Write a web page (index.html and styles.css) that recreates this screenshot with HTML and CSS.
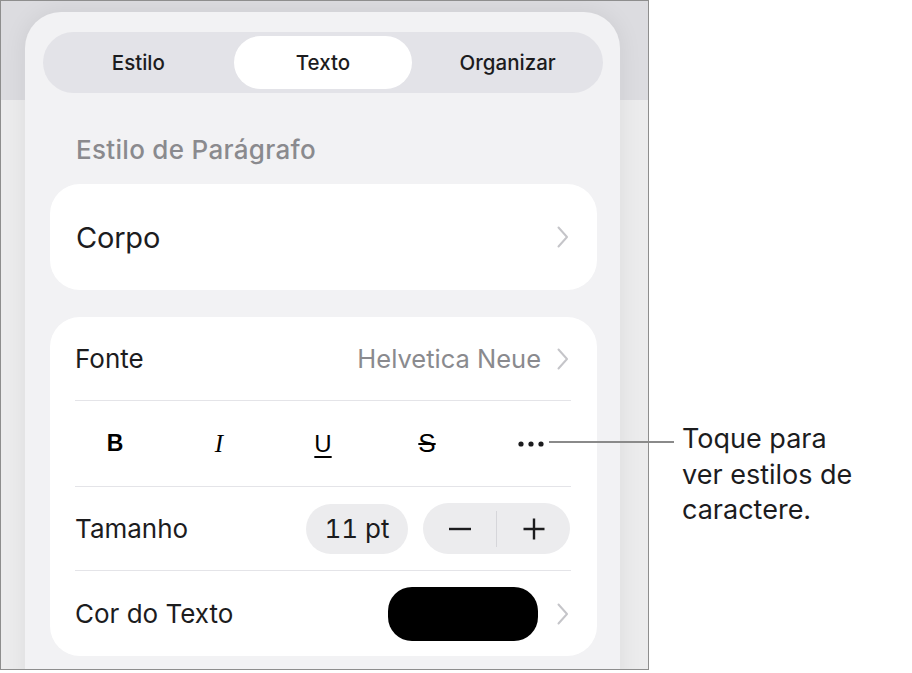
FILE: index.html
```html
<!DOCTYPE html>
<html lang="pt">
<head>
<meta charset="utf-8">
<title>Texto</title>
<link rel="stylesheet" href="styles.css">
</head>
<body>
<div class="stage">
  <div class="frame">
    <div class="panel">
      <div class="segmented">
        <div class="seg">Estilo</div>
        <div class="seg seg-active">Texto</div>
        <div class="seg">Organizar</div>
      </div>
      <div class="content">
        <div class="heading">Estilo de Parágrafo</div>
        <div class="card card-single">
          <span class="big">Corpo</span>
          <svg class="chev" viewBox="0 0 12 22" width="12" height="22"><path d="M1.5 1.5 L10 11 L1.5 20.5" /></svg>
        </div>
        <div class="card card-list">
          <div class="row row-font">
            <span class="label">Fonte</span>
            <span class="value">Helvetica Neue
              <svg class="chev" viewBox="0 0 12 22" width="12" height="22"><path d="M1.5 1.5 L10 11 L1.5 20.5" /></svg>
            </span>
          </div>
          <div class="row row-styles">
            <span class="st st-b">B</span>
            <span class="st st-i">I</span>
            <span class="st st-u">U</span>
            <span class="st st-s">S</span>
            <span class="st st-more">
              <svg viewBox="0 0 26 6" width="26" height="6"><circle cx="3" cy="3" r="2.6"/><circle cx="13" cy="3" r="2.6"/><circle cx="23" cy="3" r="2.6"/></svg>
            </span>
          </div>
          <div class="row row-size">
            <span class="label">Tamanho</span>
            <span class="size-ctrls">
              <span class="pt">11 pt</span>
              <span class="stepper">
                <span class="step">
                  <svg viewBox="0 0 22 22" width="22" height="22"><path d="M0 11 H22"/></svg>
                </span>
                <span class="step-div"></span>
                <span class="step">
                  <svg viewBox="0 0 22 22" width="22" height="22"><path d="M0.5 11 H21.5 M11 0.5 V21.5"/></svg>
                </span>
              </span>
            </span>
          </div>
          <div class="row row-color">
            <span class="label">Cor do Texto</span>
            <span class="value">
              <span class="swatch"></span>
              <svg class="chev" viewBox="0 0 12 22" width="12" height="22"><path d="M1.5 1.5 L10 11 L1.5 20.5" /></svg>
            </span>
          </div>
        </div>
      </div>
    </div>
  </div>
  <div class="callout">
    <div class="callout-line"></div>
    <div class="callout-text">Toque para<br>ver estilos de<br>caractere.</div>
  </div>
</div>
</body>
</html>
```
FILE: styles.css
```css
html, body {
  margin: 0;
  padding: 0;
  background: #ffffff;
}
body {
  font-family: Inter, "Liberation Sans", Arial, sans-serif;
  color: #1c1c1e;
}
.stage {
  position: relative;
  width: 912px;
  height: 673px;
  overflow: hidden;
}
.frame {
  width: 647px;
  height: 668px;
  border: 1px solid #8e8e8e;
  overflow: hidden;
  background: linear-gradient(to bottom, #dcdce0 0, #dcdce0 99px, #ececed 99px, #ececed 100%);
}
.panel {
  margin: 11px 0 0 24px;
  width: 595px;
  height: 700px;
  border-radius: 36px 36px 0 0;
  background: #f2f2f4;
  box-shadow: 0 0 24px rgba(0, 0, 0, 0.07);
  overflow: hidden;
}
.segmented {
  margin: 20px 17px 0 18px;
  height: 61px;
  box-sizing: border-box;
  border-radius: 31px;
  background: #e3e3e8;
  padding: 4px 3px;
  display: grid;
  grid-template-columns: 1fr 1fr 1fr;
}
.seg {
  display: flex;
  align-items: center;
  justify-content: center;
  font-size: 20.5px;
  font-weight: 500;
  border-radius: 27px;
}
.seg-active {
  background: #ffffff;
  margin: 0 3px 0 3px;
}
.content {
  margin: 0 23px 0 25px;
}
.heading {
  padding: 41px 0 0 26px;
  height: 32px;
  line-height: 32px;
  margin-bottom: 18px;
  font-size: 26px;
  font-weight: 500;
  color: #8a8a8e;
  letter-spacing: 0.3px;
}
.card {
  background: #ffffff;
  border-radius: 30px;
}
.card-single {
  height: 106px;
  display: flex;
  align-items: center;
  justify-content: space-between;
  padding: 0 28px 0 26px;
  margin-bottom: 27px;
}
.big {
  font-size: 29px;
  letter-spacing: -0.2px;
}
.chev {
  display: block;
  fill: none;
  stroke: #c5c5c9;
  stroke-width: 2;
  stroke-linecap: round;
  stroke-linejoin: round;
}
.card-list {
  height: 339px;
  padding: 0 26px 0 25px;
}
.row {
  display: flex;
  align-items: center;
  justify-content: space-between;
  border-bottom: 1px solid #e4e4e8;
}
.row:last-child {
  border-bottom: none;
}
.row-font { height: 83px; }
.row-styles { height: 85px; justify-content: flex-start; }
.row-size { height: 83px; }
.row-color { height: 85px; }
.label {
  font-size: 26px;
}
.value {
  display: flex;
  align-items: center;
  gap: 16px;
  font-size: 25.5px;
  color: #8a8a8e;
  margin-right: 2px;
}
.st {
  width: 80px;
  margin-right: 24px;
  display: flex;
  justify-content: center;
  align-items: center;
  color: #000;
}
.st:last-child { margin-right: 0; }
.st-b {
  font-family: "Liberation Sans", Arial, sans-serif;
  font-weight: 700;
  font-size: 23px;
}
.st-i {
  font-family: "Liberation Serif", "Times New Roman", serif;
  font-style: italic;
  font-size: 25px;
}
.st-u {
  font-family: "Liberation Sans", Arial, sans-serif;
  font-size: 24px;
  text-decoration: underline;
  text-decoration-thickness: 1.5px;
  text-underline-offset: 4px;
}
.st-s {
  font-family: "Liberation Sans", Arial, sans-serif;
  font-size: 26px;
  text-decoration: line-through;
  text-decoration-thickness: 1.5px;
}
.st-more svg {
  display: block;
  fill: #1c1c1e;
}
.size-ctrls {
  display: flex;
  align-items: center;
  gap: 15px;
  margin-right: 1px;
}
.pt {
  width: 102px;
  height: 50px;
  border-radius: 25px;
  background: #ececee;
  display: flex;
  align-items: center;
  justify-content: center;
  font-size: 26px;
  font-feature-settings: "tnum" 1;
}
.stepper {
  width: 147px;
  height: 51px;
  border-radius: 26px;
  background: #ececee;
  display: flex;
  align-items: center;
}
.step {
  flex: 1;
  display: flex;
  justify-content: center;
  align-items: center;
}
.step svg {
  display: block;
  fill: none;
  stroke: #1c1c1e;
  stroke-width: 2.4;
}
.step-div {
  width: 1px;
  height: 36px;
  background: #d6d6da;
}
.swatch {
  width: 150px;
  height: 54px;
  border-radius: 24px;
  background: #000;
  margin-right: 3px;
}
.callout {
  position: absolute;
  left: 549px;
  top: 421px;
  display: flex;
  align-items: flex-start;
}
.callout-line {
  width: 125px;
  height: 2px;
  background: #8a8a8a;
  margin-top: 20px;
  margin-right: 8px;
}
.callout-text {
  font-size: 27px;
  line-height: 35.5px;
  color: #1c1c1e;
}
```
